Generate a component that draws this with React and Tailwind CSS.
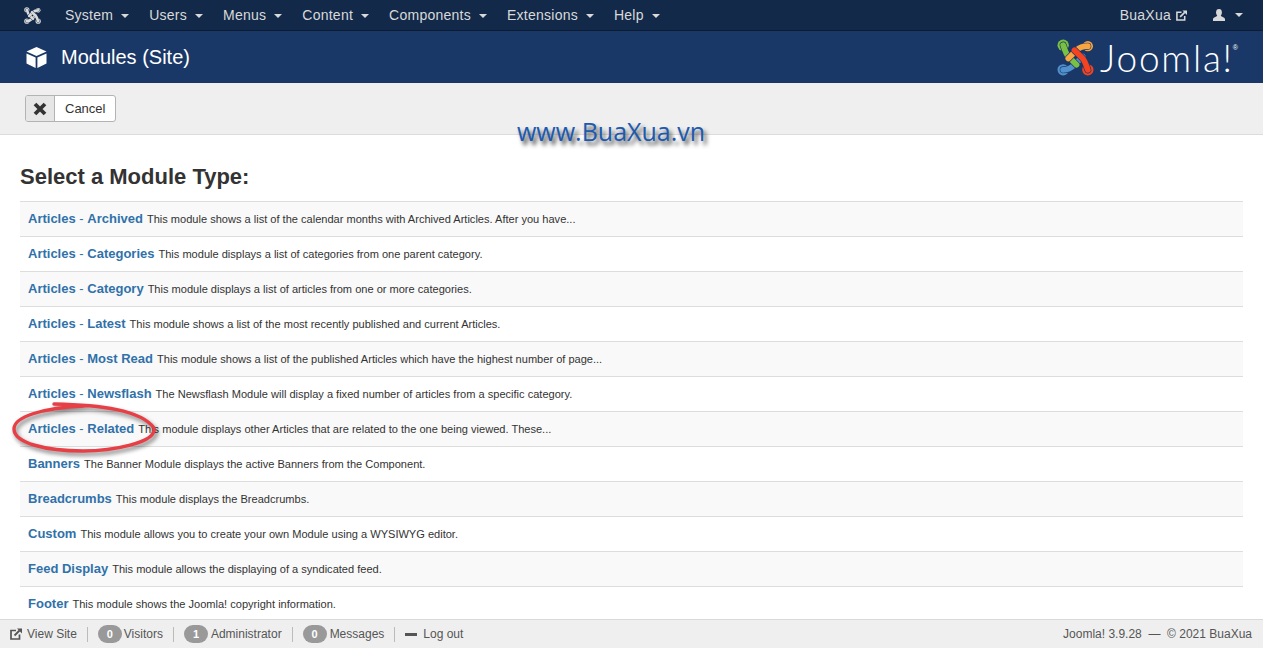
import { Fragment } from 'react';

const menus = ['System', 'Users', 'Menus', 'Content', 'Components', 'Extensions', 'Help'];

const modules = [
  ['Articles - ', 'Archived', 'This module shows a list of the calendar months with Archived Articles. After you have...'],
  ['Articles - ', 'Categories', 'This module displays a list of categories from one parent category.'],
  ['Articles - ', 'Category', 'This module displays a list of articles from one or more categories.'],
  ['Articles - ', 'Latest', 'This module shows a list of the most recently published and current Articles.'],
  ['Articles - ', 'Most Read', 'This module shows a list of the published Articles which have the highest number of page...'],
  ['Articles - ', 'Newsflash', 'The Newsflash Module will display a fixed number of articles from a specific category.'],
  ['Articles - ', 'Related', 'This module displays other Articles that are related to the one being viewed. These...'],
  ['', 'Banners', 'The Banner Module displays the active Banners from the Component.'],
  ['', 'Breadcrumbs', 'This module displays the Breadcrumbs.'],
  ['', 'Custom', 'This module allows you to create your own Module using a WYSIWYG editor.'],
  ['', 'Feed Display', 'This module allows the displaying of a syndicated feed.'],
  ['', 'Footer', 'This module shows the Joomla! copyright information.'],
];

function Caret() {
  return <span className="inline-block ml-[8px] align-middle border-x-[4px] border-t-[4px] border-x-transparent border-t-current" />;
}

// four interlocked arms of the Joomla mark, each with a ball on the corner
function JoomlaMark({ size, colors, gap }) {
  const [green, orange, blue, red] = colors;
  const arms = [
    ['M6 30 C11 30 14 28 17 25 L25 17', blue],
    ['M6 6 C8 12 9 15 11 17 L19 25', green],
    ['M30 7 C25 7 22 8 19 11 L11 19', orange],
    ['M30 30 C28 24 27 21 25 19 L17 11', red],
  ];
  return (
    <svg width={size} height={size} viewBox="0 0 36 36" fill="none" strokeLinecap="round" strokeLinejoin="round">
      <circle cx="6" cy="6" r="5.5" fill={green} />
      <circle cx="30" cy="7" r="5" fill={orange} />
      <circle cx="6" cy="30" r="5.5" fill={blue} />
      <circle cx="30" cy="30" r="5.5" fill={red} />
      {arms.map(([d, c]) => (
        <Fragment key={d}>
          <path d={d} stroke={gap} strokeWidth="6.8" />
          <path d={d} stroke={c} strokeWidth="5.6" />
        </Fragment>
      ))}
    </svg>
  );
}

function CubeIcon() {
  return (
    <svg width="21" height="21" viewBox="0 0 21 21" fill="#fff">
      <path d="M10.5 0 L20.5 4.6 L10.5 9 L0.5 4.6 Z" />
      <path d="M0.5 6.6 L9.6 10.6 L9.6 21 L0.5 16.4 Z" />
      <path d="M20.5 6.6 L11.4 10.6 L11.4 21 L20.5 16.4 Z" />
    </svg>
  );
}

function NewTabIcon({ size }) {
  return (
    <svg width={size} height={size} viewBox="0 0 12 12" fill="none" stroke="currentColor">
      <path d="M6 2.5 H1 V11 H9.5 V6.5" strokeWidth="1.7" />
      <path d="M4.5 7.5 L9.5 2.5" strokeWidth="1.8" />
      <path d="M7 0.5 H12 V5.5 Z" fill="currentColor" stroke="none" />
    </svg>
  );
}

function UserIcon() {
  return (
    <svg width="12" height="12" viewBox="0 0 12 12" fill="currentColor">
      <ellipse cx="6" cy="3.4" rx="2.9" ry="3.4" />
      <path d="M0 12 V10.2 C0 8.2 3.6 8.4 4.4 6 H7.6 C8.4 8.4 12 8.2 12 10.2 V12 Z" />
    </svg>
  );
}

function CancelIcon() {
  return (
    <svg width="14" height="14" viewBox="0 0 14 14" fill="none" stroke="#333" strokeWidth="3.8">
      <path d="M2 2 L12 12 M12 2 L2 12" />
    </svg>
  );
}

function Badge({ n }) {
  return <span className="inline-flex items-center justify-center w-[24px] h-[18px] rounded-full bg-[#999] text-white text-[11px] font-bold">{n}</span>;
}

function Sep() {
  return <span className="w-px h-[15px] bg-[#bbb] mx-[10px]" />;
}

export default function App() {
  return (
    <div className="relative h-screen overflow-hidden flex flex-col bg-white text-[#333] font-['Liberation_Sans',Arial,sans-serif]">
      {/* Top menu */}
      <nav className="h-[31px] shrink-0 flex items-center bg-[#13294a] border-b border-[#0c1c33] text-[#d9d9d9] text-[14px] tracking-[0.25px]">
        <div className="w-[65px] flex justify-center pr-[1px]">
          <JoomlaMark size={17} colors={['#d9d9d9', '#d9d9d9', '#d9d9d9', '#d9d9d9']} gap="#13294a" />
        </div>
        <div className="flex gap-[20px]">
          {menus.map((m) => (
            <a key={m} className="whitespace-nowrap">{m}<Caret /></a>
          ))}
        </div>
        <div className="ml-auto flex items-center pr-[20px]">
          <span>BuaXua</span>
          <span className="ml-[5px]"><NewTabIcon size={11} /></span>
          <span className="ml-[26px] mr-[2px]"><UserIcon /></span>
          <Caret />
        </div>
      </nav>

      {/* Title bar */}
      <header className="h-[52px] shrink-0 flex items-center justify-between bg-[#1a3867] pl-[26px] pr-[25px] text-white">
        <div className="flex items-center gap-[14px]">
          <CubeIcon />
          <h1 className="text-[20px] leading-none">Modules (Site)</h1>
        </div>
        <div className="flex items-center gap-[6px]">
          <JoomlaMark size={37} colors={['#7ac143', '#f9a541', '#5091cd', '#f44321']} gap="#1a3867" />
          <span className="font-['Lato',sans-serif] font-light text-[37px] leading-none tracking-[1.8px]">Joomla!</span>
          <span className="text-[7px] self-start mt-[4px] -ml-[7px]">®</span>
        </div>
      </header>

      {/* Toolbar */}
      <div className="h-[52px] shrink-0 flex items-center pl-[25px] bg-[#efefef] border-b border-[#dcdcdc]">
        <button className="flex h-[27px] items-stretch rounded-[3px] border border-[#b3b3b3] bg-white text-[13px] text-[#333] overflow-hidden">
          <span className="w-[29px] flex items-center justify-center bg-[#e6e6e6] border-r border-[#b3b3b3]">
            <CancelIcon />
          </span>
          <span className="px-[10px] flex items-center">Cancel</span>
        </button>
      </div>

      {/* Module list */}
      <main className="flex-1 min-h-0 overflow-hidden px-[20px]">
        <h2 className="mt-[29px] mb-[11px] text-[22px] leading-[26px] font-bold text-[#333]">Select a Module Type:</h2>
        <ul className="border-t border-[#ddd]">
          {modules.map(([prefix, name, desc], i) => (
            <li key={name} className={`h-[35px] pl-[8px] pt-[8px] flex items-baseline border-b border-[#ddd] whitespace-pre ${i % 2 === 0 ? 'bg-[#f9f9f9]' : 'bg-white'}`}>
              <a className="text-[13px] leading-[17px] text-[#3071a9]">
                {prefix ? <Fragment><b>Articles</b> - </Fragment> : null}
                <b>{name}</b>
              </a>
              <span className="text-[11.05px] ml-[4px] text-[#333]">{desc}</span>
            </li>
          ))}
        </ul>
      </main>

      {/* Status bar */}
      <footer className="h-[29px] shrink-0 flex items-center justify-between pl-[10px] pr-[11px] bg-[#efefef] border-t border-[#d9d9d9] text-[12px] text-[#555]">
        <div className="flex items-center">
          <span className="mr-[5px]"><NewTabIcon size={12} /></span>
          <span>View Site</span>
          <Sep />
          <Badge n="0" />
          <span className="ml-[2px]">Visitors</span>
          <Sep />
          <Badge n="1" />
          <span className="ml-[3px]">Administrator</span>
          <Sep />
          <Badge n="0" />
          <span className="ml-[3px]">Messages</span>
          <Sep />
          <span className="w-[12px] h-[3px] mr-[6px] bg-[#555]" />
          <span>Log out</span>
        </div>
        <span>Joomla! 3.9.28 &nbsp;— &nbsp;© 2021 BuaXua</span>
      </footer>

      {/* Things pasted over the screenshot */}
      <div className="absolute left-[517px] top-[113px] font-['Open_Sans',sans-serif] text-[25px] leading-[36px] text-[#1c5ab0] [text-shadow:3px_4px_4px_#444] whitespace-nowrap">
        www.BuaXua.vn
      </div>
      <svg className="absolute left-[11px] top-[401px] drop-shadow-[2px_3px_2px_rgba(0,0,0,0.5)]" width="150" height="58" viewBox="0 0 150 58" fill="none">
        <path d="M43 3 C90 4 130 9 143 27 C146 42 100 50 72 50 C35 50 3 42 3 28 C3 16 30 7 73 5" stroke="#e63f45" strokeWidth="3.4" strokeLinecap="round" />
      </svg>
    </div>
  );
}
